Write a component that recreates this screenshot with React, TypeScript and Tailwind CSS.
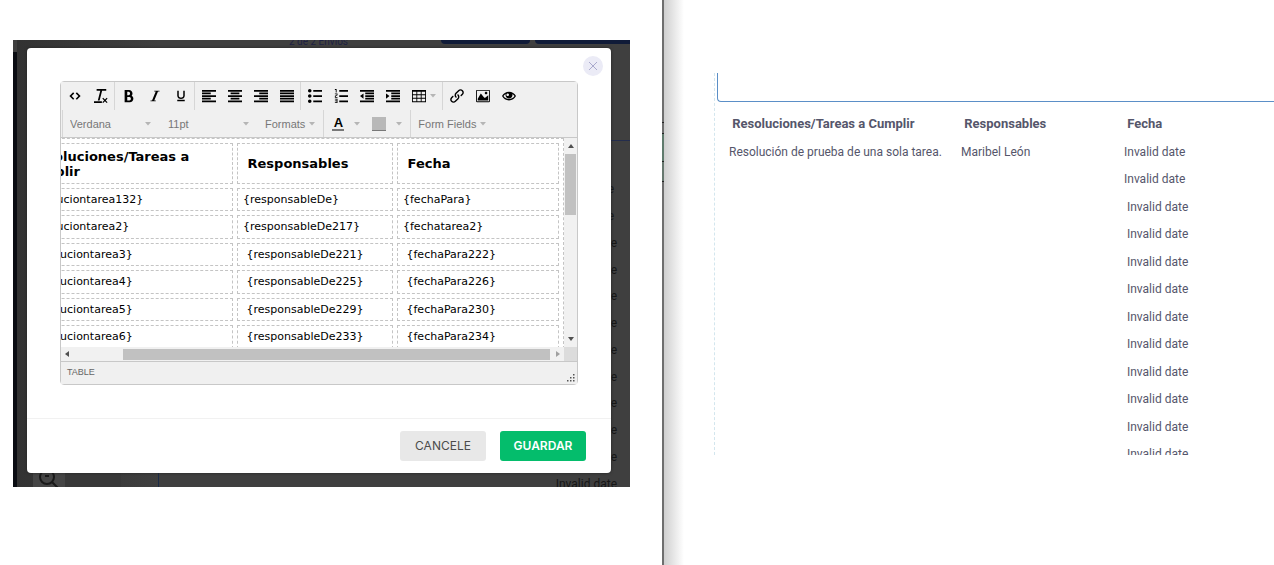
import type { ReactNode } from "react";
import {
  ImBold,
  ImClearFormatting,
  ImEmbed,
  ImEye,
  ImImage,
  ImIndentDecrease,
  ImIndentIncrease,
  ImItalic,
  ImLink,
  ImList2,
  ImListNumbered,
  ImParagraphCenter,
  ImParagraphJustify,
  ImParagraphLeft,
  ImParagraphRight,
  ImTable2,
  ImUnderline,
} from "react-icons/im";

const NBSP = "\u00a0";

const editorRows = [
  ["{resoluciontarea132}", "{responsableDe}", "{fechaPara}"],
  ["{resoluciontarea2}", "{responsableDe217}", "{fechatarea2}"],
  [NBSP + "{resoluciontarea3}", NBSP + "{responsableDe221}", NBSP + "{fechaPara222}"],
  [NBSP + "{resoluciontarea4}", NBSP + "{responsableDe225}", NBSP + "{fechaPara226}"],
  [NBSP + "{resoluciontarea5}", NBSP + "{responsableDe229}", NBSP + "{fechaPara230}"],
  [NBSP + "{resoluciontarea6}", NBSP + "{responsableDe233}", NBSP + "{fechaPara234}"],
];

const resultRows = [
  ["Resolución de prueba de una sola tarea.", "Maribel León", "Invalid date"],
  ["", "", "Invalid date"],
  ...Array.from({ length: 10 }, () => ["", "", NBSP + "Invalid date"]),
];

function Caret() {
  return (
    <svg viewBox="0 0 6 4" className="h-1 w-1.5 shrink-0 fill-[#b5b5b5]" aria-hidden="true">
      <path d="M0 0h6L3 3.6z" />
    </svg>
  );
}

function Tool({ label, children }: { label: string; children: ReactNode }) {
  return (
    <button type="button" aria-label={label} className="flex h-7 min-w-[26px] items-center justify-center text-sm text-black">
      {children}
    </button>
  );
}

function ToolGroup({ children }: { children: ReactNode }) {
  return <div className="flex border-l border-[#d6d6d6] pl-px first:border-l-0 first:pl-0">{children}</div>;
}

function Toolbar() {
  return (
    <div className="border-b border-[#c8c8c8] bg-[#f0f0f0]">
      <div className="flex h-7 pl-px">
        <ToolGroup>
          <Tool label="Código fuente"><ImEmbed className="size-3" /></Tool>
          <Tool label="Limpiar formato"><ImClearFormatting /></Tool>
        </ToolGroup>
        <ToolGroup>
          <Tool label="Negrita"><ImBold /></Tool>
          <Tool label="Cursiva"><ImItalic className="size-3" /></Tool>
          <Tool label="Subrayado"><ImUnderline className="size-3" /></Tool>
        </ToolGroup>
        <ToolGroup>
          <Tool label="Alinear a la izquierda"><ImParagraphLeft /></Tool>
          <Tool label="Centrar"><ImParagraphCenter /></Tool>
          <Tool label="Alinear a la derecha"><ImParagraphRight /></Tool>
          <Tool label="Justificar"><ImParagraphJustify /></Tool>
        </ToolGroup>
        <ToolGroup>
          <Tool label="Lista"><ImList2 /></Tool>
          <Tool label="Lista numerada"><ImListNumbered /></Tool>
          <Tool label="Reducir sangría"><ImIndentDecrease /></Tool>
          <Tool label="Aumentar sangría"><ImIndentIncrease /></Tool>
          <Tool label="Tabla">
            <span className="flex items-center gap-1 px-1.5"><ImTable2 /><Caret /></span>
          </Tool>
        </ToolGroup>
        <ToolGroup>
          <Tool label="Enlace"><ImLink /></Tool>
          <Tool label="Imagen"><ImImage /></Tool>
          <Tool label="Vista previa"><ImEye /></Tool>
        </ToolGroup>
      </div>
      <div className="ml-px flex h-[27px] items-stretch border-l border-[#d6d6d6] text-[11px] text-[#777]">
        <div className="flex border-r border-[#d6d6d6] pt-px">
          <label className="flex w-[98px] items-center pr-2.5 pl-[7px]">
            <select aria-label="Fuente" className="min-w-0 flex-1 appearance-none bg-transparent" defaultValue="Verdana">
              <option>Verdana</option>
            </select>
            <Caret />
          </label>
          <label className="flex w-[96px] items-center pr-2 pl-[7px]">
            <select aria-label="Tamaño" className="min-w-0 flex-1 appearance-none bg-transparent" defaultValue="11pt">
              <option>11pt</option>
            </select>
            <Caret />
          </label>
          <button type="button" className="flex items-center gap-1 px-2">
            Formats <Caret />
          </button>
        </div>
        <div className="flex gap-3 border-r border-[#d6d6d6] px-2 pt-px">
          <button type="button" aria-label="Color de texto" className="flex items-center gap-2.5">
            <span className="w-3 border-b-2 border-[#777] text-center text-[13px] leading-3 font-bold text-black">A</span>
            <Caret />
          </button>
          <button type="button" aria-label="Color de fondo" className="flex items-center gap-2.5">
            <span className="h-3.5 w-3.5 border-b border-[#777] bg-[#b8b8b8]" />
            <Caret />
          </button>
        </div>
        <button type="button" className="flex items-center gap-1 px-[7px] pt-px">
          Form Fields <Caret />
        </button>
      </div>
    </div>
  );
}

function EditorTable() {
  return (
    <table className="w-[552px] shrink-0 table-fixed border-separate border-spacing-[4px] self-start border border-dashed border-[#c4c4c4] text-left font-['DejaVu_Sans',sans-serif] text-[11px] text-black">
      <colgroup>
        <col />
        <col className="w-[156px]" />
        <col className="w-[162px]" />
      </colgroup>
      <thead>
        <tr className="h-[41px] text-[13px] leading-[15px]">
          <th className="border border-dashed border-[#c4c4c4] px-[5px]">{NBSP}Resoluciones/Tareas a Cumplir</th>
          <th className="border border-dashed border-[#c4c4c4] px-[5px]">{NBSP}Responsables</th>
          <th className="border border-dashed border-[#c4c4c4] px-[5px]">{NBSP}Fecha</th>
        </tr>
      </thead>
      <tbody>
        {editorRows.map((row) => (
          <tr key={row[0]} className="h-6 odd:h-[23px]">
            {row.map((cell) => (
              <td key={cell} className="border border-dashed border-[#c4c4c4] px-[5px] leading-4">{cell}</td>
            ))}
          </tr>
        ))}
      </tbody>
    </table>
  );
}

function Editor() {
  return (
    <div className="rounded-sm border border-[#c8c8c8] bg-white font-['Liberation_Sans',Arial,sans-serif]">
      <Toolbar />
      <div className="grid grid-cols-[minmax(0,1fr)_13px] grid-rows-[209px_14px]">
        <div className="flex justify-end overflow-hidden">
          <EditorTable />
        </div>
        <div className="flex flex-col items-center bg-[#f1f1f1] py-1.5">
          <svg viewBox="0 0 6 4" className="h-1 w-1.5 fill-[#505050]"><path d="M0 4h6L3 0z" /></svg>
          <div className="mt-1.5 h-[61px] w-[11px] bg-[#c1c1c1]" />
          <svg viewBox="0 0 6 4" className="mt-auto h-1 w-1.5 fill-[#505050]"><path d="M0 0h6L3 4z" /></svg>
        </div>
        <div className="flex items-center bg-[#f1f1f1] px-1">
          <svg viewBox="0 0 4 6" className="h-1.5 w-1 fill-[#505050]"><path d="M4 0v6L0 3z" /></svg>
          <div className="ml-[54px] h-[11px] flex-1 bg-[#c1c1c1]" />
          <svg viewBox="0 0 4 6" className="ml-1.5 h-1.5 w-1 fill-[#a0a0a0]"><path d="M0 0v6l4-3z" /></svg>
        </div>
        <div className="bg-[#dcdcdc]" />
      </div>
      <div className="flex h-[23px] items-center justify-between border-t border-[#c8c8c8] bg-[#f0f0f0] pl-1.5 text-[9px] text-[#666]">
        TABLE
        <svg viewBox="0 0 8 8" className="mr-0.5 mb-0.5 size-2 self-end fill-[#555]" aria-hidden="true">
          <path d="M6 0h1.5v1.5H6zM6 3h1.5v1.5H6zM3 3h1.5v1.5H3zM6 6h1.5v1.5H6zM3 6h1.5v1.5H3zM0 6h1.5v1.5H0z" />
        </svg>
      </div>
    </div>
  );
}

function DimmedPage() {
  return (
    <div className="absolute inset-0 flex overflow-hidden bg-[#3f3f3f] font-[Roboto,sans-serif]" aria-hidden="true">
      <div className="mt-3 w-1 bg-[#0a0c12]" />
      <div className="flex w-[142px] flex-col justify-end bg-gradient-to-r from-[#323232] to-[#3f3f3f]">
        <div className="flex h-3.5 border-r border-[#1c2c47] pl-4">
          <div className="w-8 overflow-hidden bg-[#454545] pl-1">
            <svg viewBox="0 0 22 22" className="-mt-1.5 size-[22px] fill-none stroke-[#191919] stroke-2">
              <circle cx="10" cy="10" r="7" />
              <path d="M15 15l6 6M8 9h4" />
            </svg>
          </div>
          <div className="w-14 bg-[#383838]" />
        </div>
      </div>
      <div className="flex min-w-0 flex-1 flex-col">
        <div className="flex h-[101px] justify-end border-b border-[#242d4d]">
          <div className="mr-[93px] -mt-1.5 text-[10px] leading-4 text-[#1e2142]">2 de 2 Envíos</div>
          <div className="mr-[5px] h-1 w-[89px] rounded-b bg-[#101b38]" />
          <div className="h-1 w-[95px] rounded-bl bg-[#101b38]" />
        </div>
        <div className="mt-[35px] -mb-2.5 flex flex-1 flex-col pr-[13px] text-right text-xs text-[#161616]">
          {Array.from({ length: 12 }, (_, i) => (
            <div key={i} className="flex flex-1 items-center justify-end first:pr-[3px] nth-2:pr-[3px]">
              Invalid date
            </div>
          ))}
        </div>
      </div>
    </div>
  );
}

function EditorDialog() {
  return (
    <div role="dialog" aria-label="Editor" className="relative rounded bg-white shadow-[0_0_3px_#222]">
      <button
        type="button"
        aria-label="Cerrar"
        className="absolute top-2 right-2 flex size-5 items-center justify-center rounded-full bg-[#ebebf6]"
      >
        <svg viewBox="0 0 10 10" className="size-2.5 fill-none stroke-[#a9a9cc]">
          <path d="M1 1l8 8M9 1L1 9" />
        </svg>
      </button>
      <div className="px-[33px] pt-[33px] pb-[33px]">
        <Editor />
      </div>
      <div className="flex justify-end gap-3.5 border-t border-[#f1f1f1] px-[25px] py-3 font-[Inter,sans-serif] text-xs">
        <button type="button" className="h-[30px] w-[86px] rounded-[3px] bg-[#e8e8e8] text-[#4c4c4c]">CANCELE</button>
        <button type="button" className="h-[30px] w-[86px] rounded-[3px] bg-[#04bd6c] font-semibold text-white">GUARDAR</button>
      </div>
    </div>
  );
}

function WindowEdge() {
  return (
    <div className="flex w-0.5 shrink-0 flex-col bg-[#6e6e6e]" aria-hidden="true">
      <div className="mt-[122px] h-3 border-y border-[#222]" />
      <div className="h-7 border-b border-[#222] bg-[#5f7a6c]" />
      <div className="h-5 border-b border-[#222] bg-[#66776e]" />
    </div>
  );
}

function Results() {
  return (
    <div className="mt-[73px] ml-[50px] h-[382px] flex-1 overflow-hidden border-l border-dashed border-[#d3e6ee] pl-0.5 font-[Roboto,sans-serif] text-[#55566b]">
      <div className="h-[29px] rounded-bl border-b border-l border-solid border-[#5b8fc7]" />
      <table className="w-full table-fixed text-left text-xs">
        <colgroup>
          <col className="w-[232px]" />
          <col className="w-[163px]" />
          <col />
        </colgroup>
        <thead>
          <tr className="h-9 text-[13px]">
            <th className="pt-2 pl-3 font-bold">{NBSP}Resoluciones/Tareas a Cumplir</th>
            <th className="pt-2 pl-3 font-bold">{NBSP}Responsables</th>
            <th className="pt-2 pl-3 font-bold">{NBSP}Fecha</th>
          </tr>
        </thead>
        <tbody>
          {resultRows.map((row, i) => (
            <tr key={i} className="h-7 odd:h-[27px]">
              {row.map((cell, j) => (
                <td key={j} className="py-0 pl-3 whitespace-nowrap">{cell}</td>
              ))}
            </tr>
          ))}
        </tbody>
      </table>
    </div>
  );
}

export default function App() {
  return (
    <main className="grid min-h-screen grid-cols-[331fr_306fr] bg-white">
      <section className="pt-10 pr-8 pl-[13px]">
        <div className="relative pt-2 pr-[19px] pb-3.5 pl-3.5">
          <DimmedPage />
          <EditorDialog />
        </div>
      </section>
      <section className="flex min-w-0">
        <WindowEdge />
        <div className="flex min-w-0 flex-1 bg-[linear-gradient(to_right,#cfcfcf,white_20px)]">
          <Results />
        </div>
      </section>
    </main>
  );
}
